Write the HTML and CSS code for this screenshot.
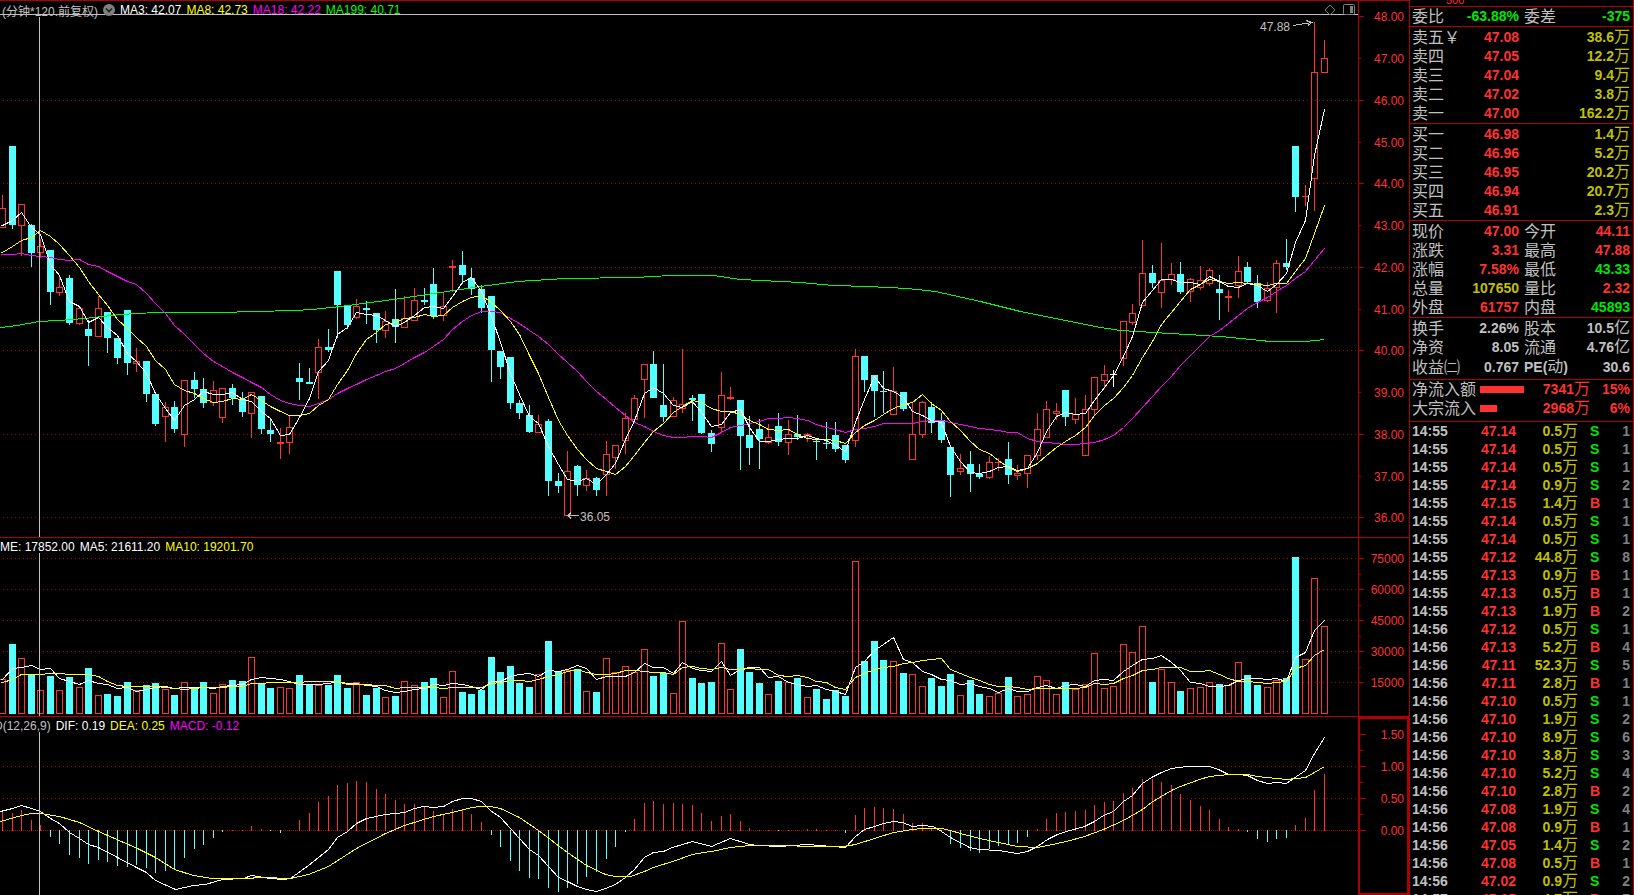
FILE: index.html
```html
<!DOCTYPE html>
<html lang="zh-CN">
<head>
<meta charset="utf-8">
<title>分时行情</title>
<link rel="stylesheet" href="styles.css">
</head>
<body>
<div class="terminal">
  <main class="charts">
    <section class="panel panel-price">
      <svg id="price" class="plot" viewBox="0 0 1358 538" preserveAspectRatio="none"></svg>
      <header class="legend">
        <span class="muted">(分钟*120.前复权)</span>
        <button class="icon-btn" aria-label="展开">
          <svg width="12" height="12" viewBox="0 0 12 12"><circle cx="6" cy="6" r="6" fill="#808080"/><path d="M3 4.5 6 7.5 9 4.5" fill="none" stroke="#202020" stroke-width="1.6"/></svg>
        </button>
        <span class="white">MA3: 42.07</span>
        <span class="yellow">MA8: 42.73</span>
        <span class="magenta">MA18: 42.22</span>
        <span class="green">MA199: 40.71</span>
        <span class="tools">
          <button class="icon-btn" aria-label="标记">
            <svg width="12" height="12" viewBox="0 0 12 12"><path d="M6 1 11 6 6 11 1 6Z" fill="none" stroke="#808080"/></svg>
          </button>
          <button class="icon-btn" aria-label="侧栏">
            <svg width="12" height="12" viewBox="0 0 12 12"><rect x="0.5" y="0.5" width="11" height="10" rx="1" fill="none" stroke="#808080"/><rect x="7" y="2" width="3" height="7" fill="#808080"/></svg>
          </button>
        </span>
      </header>
    </section>
    <div class="axis" id="axis-price"></div>

    <section class="panel">
      <svg id="volume" class="plot" viewBox="0 538 1358 179" preserveAspectRatio="none"></svg>
      <header class="legend">
        <span class="white">ME: 17852.00</span>
        <span class="white">MA5: 21611.20</span>
        <span class="yellow">MA10: 19201.70</span>
      </header>
    </section>
    <div class="axis" id="axis-volume"></div>

    <section class="panel">
      <svg id="macd" class="plot" viewBox="0 717 1358 178" preserveAspectRatio="none"></svg>
      <header class="legend">
        <span class="muted cut">D(12,26,9)</span>
        <span class="white">DIF: 0.19</span>
        <span class="yellow">DEA: 0.25</span>
        <span class="magenta">MACD: -0.12</span>
      </header>
    </section>
    <div class="axis axis-active" id="axis-macd"></div>
  </main>

  <aside class="quote">
    <div class="strip">500</div>
    <table class="pairs block-first">
      <tr><th>委比</th><td class="up-green">-63.88%</td><th>委差</th><td class="up-green">-375</td></tr>
    </table>
    <table class="book" id="asks"></table>
    <table class="book" id="bids"></table>
    <table class="pairs">
      <tr><th>现价</th><td class="red">47.00</td><th>今开</th><td class="red">44.11</td></tr>
      <tr><th>涨跌</th><td class="red">3.31</td><th>最高</th><td class="red">47.88</td></tr>
      <tr><th>涨幅</th><td class="red">7.58%</td><th>最低</th><td class="up-green">43.33</td></tr>
      <tr><th>总量</th><td class="gold">107650</td><th>量比</th><td class="red">2.32</td></tr>
      <tr><th>外盘</th><td class="red">61757</td><th>内盘</th><td class="up-green">45893</td></tr>
    </table>
    <table class="pairs roomy">
      <tr><th>换手</th><td>2.26%</td><th>股本</th><td>10.5<i>亿</i></td></tr>
      <tr><th>净资</th><td>8.05</td><th>流通</th><td>4.76<i>亿</i></td></tr>
      <tr><th>收益㈡</th><td>0.767</td><th><b>PE(</b>动<b>)</b></th><td>30.6</td></tr>
    </table>
    <table class="flow roomy">
      <tr><th>净流入额</th><td class="meter"><div class="bar" style="width:44px"></div></td><td class="red">7341<i>万</i></td><td class="red">15%</td></tr>
      <tr><th>大宗流入</th><td class="meter"><div class="bar" style="width:17px"></div></td><td class="red">2968<i>万</i></td><td class="red">6%</td></tr>
    </table>
    <table class="ticks" id="ticks"></table>
  </aside>
</div>
<script src="app.js"></script>
</body>
</html>
```

FILE: styles.css
```css
* { box-sizing: border-box; }

body {
  margin: 0;
  background: #000;
  color: #c0c0c0;
  font: 12px "Liberation Sans", "Noto Sans CJK SC", sans-serif;
  overflow: hidden;
}

.terminal {
  display: flex;
  height: 100vh;
}

.charts {
  flex: 1;
  min-width: 0;
  display: grid;
  grid-template-columns: minmax(0, 1fr) 51px;
  grid-template-rows: 538fr 179fr 178fr;
}

.panel {
  display: grid;
  min-height: 0;
  overflow: hidden;
}

.plot,
.legend {
  grid-area: 1 / 1;
  min-width: 0;
  min-height: 0;
}
.plot { width: 100%; height: 100%; display: block; }
.plot,
.axis svg { shape-rendering: crispEdges; }
.plot text { font-size: 12px; fill: #c0c0c0; }

.legend {
  display: flex;
  align-items: center;
  align-self: start;
  gap: 5px;
  height: 17px;
  white-space: nowrap;
}
.panel-price .legend { height: 20px; padding-left: 2px; }
.cut { margin-left: -6px; }
.tools {
  display: flex;
  gap: 7px;
  margin-left: auto;
  padding-right: 3px;
}
.icon-btn {
  width: 12px;
  height: 12px;
  padding: 0;
  border: 0;
  background: none;
}
.icon-btn svg { display: block; }

.muted { color: #c0c0c0; }
.white { color: #fff; }
.yellow { color: #ff0; }
.magenta { color: #f0f; }
.green { color: #0f0; }
.red { color: #ff3232; }
.up-green { color: #00e600; }
.gold { color: #c0c000; }
.gray { color: #808080; }

.axis {
  position: relative;
  min-height: 0;
  color: #ff3232;
}
.axis-active { border: 2px solid #b00000; }
.axis svg {
  position: absolute;
  width: 100%;
  height: 100%;
}
.axis span {
  position: absolute;
  right: 5px;
  line-height: 14px;
  margin-top: -6px;
}
.axis-active span { right: 3px; }

.quote {
  width: 225px;
  border-left: 1px solid #b00000;
  border-right: 1px solid #b00000;
  overflow: hidden;
}
.strip {
  height: 6px;
  padding-left: 36px;
  overflow: hidden;
  font-size: 11px;
  line-height: 0;
  color: #ff3232;
}

table {
  width: 100%;
  table-layout: fixed;
  border-collapse: separate;
  border-spacing: 0;
  border-top: 1px solid #b00000;
  padding: 1px 3px 0 2px;
}
.block-first { padding-top: 0; }
.roomy { padding-bottom: 2px; }
tr { height: 19px; }
th,
td {
  padding: 0;
  height: 19px;
  line-height: 19px;
  white-space: nowrap;
}
th {
  font-size: 16px;
  font-weight: 400;
  text-align: left;
}
th b {
  font-size: 14px;
  font-weight: 700;
}
td {
  font-size: 14px;
  font-weight: bold;
  text-align: right;
}
td i {
  font-size: 16px;
  font-style: normal;
  font-weight: 400;
  line-height: 1px;
}

.pairs th { width: 46px; }
.pairs th:nth-child(3) { padding-left: 5px; width: 51px; }
.pairs td:nth-child(2) { width: 61px; }
.book th { width: 50px; }
.book td:nth-child(2) { width: 57px; }

.flow { padding-top: 0; padding-bottom: 3px; }
.flow th { width: 68px; }
.flow .meter { width: 44px; }
.flow td:nth-child(3) { width: 66px; }
.bar { height: 7px; background: #ff3232; }

.ticks { padding-top: 0; }
.ticks tr,
.ticks td { height: 18px; line-height: 18px; }
.ticks td:nth-child(1) { text-align: left; width: 44px; }
.ticks td:nth-child(2) { width: 60px; }
.ticks td:nth-child(3) { width: 62px; }
.ticks td:nth-child(4) { text-align: left; padding-left: 12px; }
.ticks td:nth-child(5) { width: 24px; }
```

FILE: app.js
```js
// Candles: colour (r up, c down, w flat), high, body top, body bottom, low, in plot units
const candles = `
r195,208,228,228 c146,146,225,229 r204,204,226,256 c224,225,253,267 r239,246,253,258
c250,250,292,305 r277,287,293,296 c275,278,323,325 r308,308,324,325 c320,329,336,366
r296,308,337,337 c312,312,338,353 c338,338,358,364 c310,310,363,375 r348,361,364,372
c361,361,394,402 c394,394,424,426 r402,407,417,442 c401,407,429,433 r380,380,435,447
c372,380,389,398 c378,389,403,408 r381,390,403,406 r388,388,418,423 c384,388,398,405
c392,399,412,417 r392,392,414,438 c396,396,429,434 c419,430,434,442 r428,442,444,459
r415,427,443,454 c363,378,382,400 c368,382,384,384 r339,347,373,399 c329,347,350,352
c271,271,305,338 c306,306,325,329 r299,306,318,319 c301,308,310,324 c313,313,330,343
r311,321,331,338 c289,319,327,343 r296,318,328,328 r288,300,321,321 c288,300,302,305
c268,284,316,319 r293,306,316,321 r260,266,268,292 c251,265,275,284 c268,278,289,295
c285,289,308,313 c296,296,350,382 c351,351,367,379 c357,357,403,409 c400,403,413,419
c405,415,432,433 r415,424,433,433 c419,421,481,496 c473,481,486,493 r451,471,516,516
c465,466,485,496 r470,478,486,491 c477,478,490,496 r441,454,475,496 r445,445,458,469
r413,418,441,454 r395,398,420,420 r364,364,380,418 c351,364,398,398 c364,405,417,422
r397,400,417,417 r349,404,409,413 c395,398,400,421 c394,394,433,434 c430,433,444,452
r372,395,428,433 r387,397,399,400 c400,400,436,470 c416,435,448,465 c419,429,439,469
r424,437,443,444 c413,426,442,446 r420,434,443,455 c415,434,437,440 r433,434,436,442
c438,441,442,460 c422,443,444,449 c422,435,449,452 c445,445,460,463 r349,356,441,447
c356,356,380,392 c375,375,391,417 c371,391,392,413 r367,391,415,415 c392,392,409,411
r402,434,460,460 r401,402,435,438 c402,407,423,433 c413,420,440,443 c447,447,475,497
r454,468,472,475 c451,464,474,492 c464,474,477,479 r456,462,478,479 r458,462,463,471
c442,459,475,484 r465,473,476,480 r455,455,474,488 r413,429,456,460 r401,409,438,438
r403,411,414,420 c390,390,417,426 r398,414,420,424 r395,409,456,456 r377,377,410,415
r365,374,381,389 w370,374,375,387 r321,321,359,366 r304,313,323,325 r240,273,306,306
c265,273,283,288 r243,280,293,308 r263,274,280,285 c262,274,292,294 r278,279,292,302
r266,280,288,290 r268,270,284,286 c275,289,293,320 r290,296,298,312 r256,271,286,298
c262,267,282,284 c275,283,302,308 r282,288,301,302 r260,263,288,313 c239,263,267,270
c146,146,197,212 r185,196,197,206 r22,72,179,211 r40,58,73,73`.trim().split(/\s+/).map(t => {
  const [high, top, bottom, low] = t.slice(1).split(',').map(Number);
  return { kind: t[0], high, top, bottom, low };
});

const volumes = [
  679,644,658,674,690,676,690,677,687,668,695,694,696,682,690,685,683,689,695,682,
  688,682,693,684,680,681,657,684,688,687,688,675,684,685,685,675,688,682,695,688,
  697,696,681,685,682,678,697,671,692,694,690,657,672,666,683,687,674,641,671,670,
  669,691,692,658,672,666,672,649,676,673,693,621,678,683,682,643,689,649,672,683,
  694,681,682,678,697,689,699,690,696,561,661,641,660,661,673,674,686,678,686,674,
  695,680,694,696,693,677,696,694,676,680,694,682,689,684,653,688,686,644,652,626,
  682,669,682,691,688,687,682,684,685,662,675,685,687,680,678,557,659,578,626];

const histogram = [
  812,813,810,820,825,837,844,855,858,864,860,862,866,867,865,868,873,871,870,858,
  849,845,838,832,830,830,826,829,831,833,830,820,813,802,796,785,783,781,782,789,
  794,800,804,804,806,811,814,809,810,814,822,835,847,861,871,878,879,888,892,888,
  884,877,872,859,847,832,819,803,801,804,803,804,805,813,821,816,814,821,828,830,
  830,831,830,830,829,829,830,830,833,815,808,807,808,809,814,823,823,829,832,844,
  848,851,853,849,846,845,843,837,829,819,813,812,811,810,805,802,801,793,788,779,
  779,782,785,794,800,806,810,819,827,829,832,839,842,839,838,825,818,790,774];

const ma199 = '0,327 17,325 38,321 58,320 84,318 120,314 155,312 218,312 256,311 293,310 312,309 340,306 370,302 400,298 440,292 480,286 517,281 565,278 635,277 670,275 713,275 740,279 760,280 800,282 833,285 867,286 907,288 935,291 980,301 1020,311 1060,319 1100,327 1120,330 1170,333 1220,336 1270,341 1305,341 1324,339';
const dif = '0,811 12,808 21,805 31,808 40,811 50,818 59,823 69,832 79,838 88,844 98,847 117,857 136,867 146,872 155,880 175,889 193,885 205,884 222,879 243,878 251,875 263,877 270,878 283,879 290,878 308,865 328,849 337,837 347,831 356,823 366,818 385,814 404,812 414,808 423,806 433,807 443,806 452,801 462,798 471,798 481,801 490,810 500,817 510,828 519,838 529,849 538,855 548,866 558,877 567,881 577,886 586,889 596,891 605,888 615,884 625,877 634,869 644,857 653,852 663,851 672,847 692,841 711,846 730,838 749,844 758,845 778,846 807,844 832,846 845,847 855,836 864,829 874,826 883,823 893,821 902,822 912,826 921,825 933,826 941,831 950,837 969,847 979,849 998,850 1017,853 1027,851 1037,846 1047,839 1057,834 1066,831 1084,826 1094,821 1103,815 1113,811 1123,801 1132,795 1142,783 1151,777 1161,772 1171,768 1187,766 1209,766 1218,769 1228,774 1238,774 1247,775 1257,780 1267,783 1277,782 1286,783 1296,776 1305,770 1314,753 1324,737';
const dea = '0,821 21,815 31,813 40,813 59,816 79,822 98,831 137,848 155,857 174,869 193,875 212,878 243,878 263,877 290,878 308,874 328,866 356,848 385,833 404,825 433,816 452,812 471,807 481,806 490,806 500,808 519,817 538,830 567,852 586,865 605,874 615,876 630,876 644,871 653,867 672,861 692,854 703,852 711,851 730,847 749,845 843,846 855,844 874,838 893,832 912,829 921,828 941,828 950,830 960,833 979,838 998,842 1017,846 1037,847 1047,845 1066,841 1084,836 1103,829 1123,820 1142,809 1151,802 1171,790 1180,786 1199,779 1209,776 1228,774 1247,774 1257,776 1286,779 1305,777 1314,772 1324,766';

const RED = '#ff3232', CYAN = '#54ffff', RULE = '#b00000';
const xAt = i => Math.floor(2.5 + 9.58 * i);
const rect = (x, y, w, h, fill) => `<rect x="${x}" y="${y}" width="${w}" height="${h}" fill="${fill}"/>`;
const hollow = (x, y, w, h) => `<rect x="${x + 0.5}" y="${y + 0.5}" width="${w - 1}" height="${h - 1}" fill="none" stroke="${RED}"/>`;
const line = (points, color) => `<polyline points="${points}" transform="translate(0.5 0.5)" fill="none" stroke="${color}"/>`;
const grid = (y, dash) => `<line x1="3" x2="1358" y1="${y + 0.5}" y2="${y + 0.5}" stroke="${RULE}" stroke-dasharray="${dash}"/>`;

// Moving average; "lead" supplies the values before a full window exists
function average(values, n, lead) {
  return `0,${lead[0]} ` + values.map((_, i) => {
    const v = i < n - 1 ? lead[i] : values.slice(i - n + 1, i + 1).reduce((a, b) => a + b) / n;
    return `${xAt(i)},${Math.round(v)}`;
  }).join(' ');
}

function drawPrice() {
  let out = [100, 183, 267, 350, 434, 517].map(y => grid(y, '1 3')).join('');
  out += rect(0, 0, 1358, 1, RULE) + rect(0, 537, 1358, 1, RULE);
  out += rect(0, 14, 1358, 1, '#c0c0c0');
  candles.forEach((c, i) => {
    const x = xAt(i), h = c.bottom - c.top;
    if (c.kind === 'r' && h > 2) {
      out += rect(x, c.high, 1, c.top - c.high, RED) + rect(x, c.bottom, 1, c.low - c.bottom, RED);
      out += hollow(x - 3, c.top, 7, h);
    } else {
      const color = { r: RED, c: CYAN, w: '#fff' }[c.kind];
      out += rect(x, c.high, 1, c.low - c.high, color) + rect(x - 3, c.top, 7, h, color);
    }
  });
  const close = candles.map(c => c.kind === 'c' ? c.bottom : c.top);
  out += line(ma199, '#0f0');
  out += line(average(close, 18, [254,254,253,255,256,257,259,260,259,264,266,271,276,281,284,293,303]), '#f0f');
  out += line(average(close, 8, [252,246,240,237,230,236,244]), '#ff0');
  out += line(average(close, 3, [225,220]), '#fff');
  out += rect(39, 17, 1, 520, '#c0c0c0');
  out += '<path d="M1293 25.5 1312 22.5M1306 20.5 1312 22.5 1308 25.5M568 515.5H579M571 512.5 568 515.5 571 518.5" fill="none" stroke="#c0c0c0"/>';
  out += '<text x="1260" y="31">47.88</text><text x="580" y="521">36.05</text>';
  document.getElementById('price').innerHTML = out;
}

function drawVolume() {
  let out = [558, 589, 620, 651, 682].map(y => grid(y, '1 3')).join('') + rect(0, 716, 1358, 1, RULE);
  volumes.forEach((y, i) => {
    const x = xAt(i) - 3;
    out += candles[i].kind === 'c' ? rect(x, y, 7, 714 - y, CYAN) : hollow(x, y, 7, 714 - y);
  });
  out += line(average(volumes, 5, [679,668,667,665]), '#fff');
  out += line(average(volumes, 10, [682,679,674,674,674,673,673,674,674]), '#ff0');
  out += rect(39, 553, 1, 163, '#c0c0c0');
  document.getElementById('volume').innerHTML = out;
}

function drawMacd() {
  let out = grid(766, '1 3') + grid(798, '1 3') + grid(830, '1 1');
  histogram.forEach((y, i) => {
    out += y > 830 ? rect(xAt(i), 830, 1, y - 830, CYAN) : rect(xAt(i), y, 1, 831 - y, RED);
  });
  out += line(dif, '#fff') + line(dea, '#ff0') + rect(39, 732, 1, 163, '#c0c0c0');
  document.getElementById('macd').innerHTML = out;
}

// Axis labels with long ticks at "major" entries and short ones elsewhere
function drawAxis(id, from, height, marks, frame = '') {
  let ticks = frame, labels = '';
  marks.forEach(([y, label, major]) => {
    ticks += rect(0, y - from, major ? 6 : 3, 1, RULE);
    if (label) labels += `<span style="top:${(y - from) / height * 100}%">${label}</span>`;
  });
  document.getElementById(id).innerHTML = `<svg viewBox="0 0 51 ${height}" preserveAspectRatio="none">${ticks}</svg>${labels}`;
}

drawPrice();
drawVolume();
drawMacd();
drawAxis('axis-price', 0, 538,
  [16,58,100,142,183,225,267,309,350,392,434,476,517].map((y, i) => [y, (48 - i).toFixed(2), i % 2 === 0]),
  rect(0, 0, 1, 538, RULE) + rect(0, 0, 51, 1, RULE) + rect(0, 537, 51, 1, RULE));
drawAxis('axis-volume', 538, 179,
  [[558,'75000',1],[574],[589,'60000',1],[605],[620,'45000',1],[636],[651,'30000',1],[667],[682,'15000',1]],
  rect(0, 0, 1, 179, RULE) + rect(0, 178, 51, 1, RULE));
drawAxis('axis-macd', 719, 174, [[734,'1.50',1],[750],[766,'1.00',1],[782],[798,'0.50',1],[814],[830,'0.00',1]]);

const book = (id, rows) => {
  document.getElementById(id).innerHTML = rows.map(([name, price, amount]) =>
    `<tr><th>${name}</th><td class="red">${price}</td><td class="gold">${amount}<i>万</i></td></tr>`).join('');
};
book('asks', [['卖五￥','47.08','38.6'],['卖四','47.05','12.2'],['卖三','47.04','9.4'],['卖二','47.02','3.8'],['卖一','47.00','162.2']]);
book('bids', [['买一','46.98','1.4'],['买二','46.96','5.2'],['买三','46.95','20.2'],['买四','46.94','20.7'],['买五','46.91','2.3']]);

const trades = `14:55 47.14 0.5 S 1|14:55 47.14 0.5 S 1|14:55 47.14 0.5 S 1|14:55 47.14 0.9 S 2|14:55 47.15 1.4 B 1
14:55 47.14 0.5 S 1|14:55 47.14 0.5 S 1|14:55 47.12 44.8 S 8|14:55 47.13 0.9 B 1|14:55 47.13 0.5 B 1
14:55 47.13 1.9 B 2|14:56 47.12 0.5 S 1|14:56 47.13 5.2 B 4|14:56 47.11 52.3 S 5|14:56 47.11 2.8 B 1
14:56 47.10 0.5 S 1|14:56 47.10 1.9 S 2|14:56 47.10 8.9 S 6|14:56 47.10 3.8 S 3|14:56 47.10 5.2 S 4
14:56 47.10 2.8 B 2|14:56 47.08 1.9 S 4|14:56 47.08 0.9 B 1|14:56 47.05 1.4 S 2|14:56 47.08 0.5 B 1
14:56 47.02 0.9 S 2|14:57 47.05 4.7 B 7`.split(/[|\n]/);
document.getElementById('ticks').innerHTML = trades.map(t => {
  const [time, price, amount, side, count] = t.split(' ');
  return `<tr><td>${time}</td><td class="red">${price}</td><td class="gold">${amount}<i>万</i></td><td class="${side === 'B' ? 'red' : 'up-green'}">${side}</td><td class="gray">${count}</td></tr>`;
}).join('');
```
